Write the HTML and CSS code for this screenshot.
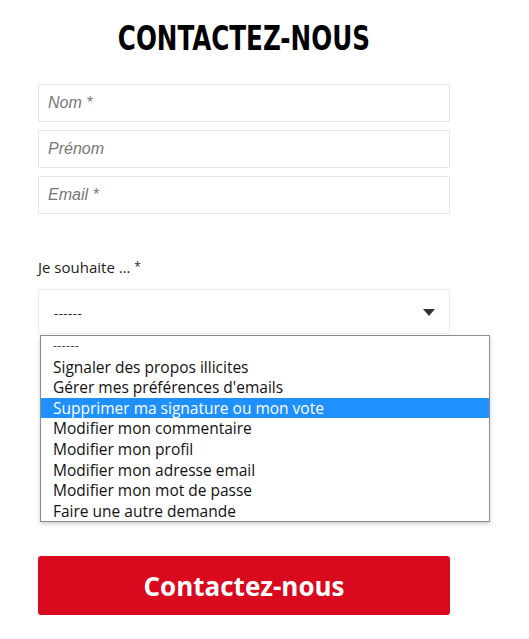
FILE: index.html
```html
<!DOCTYPE html>
<html lang="fr">
<head>
<meta charset="utf-8">
<link rel="stylesheet" href="styles.css">
</head>
<body>
<div class="page">
  <h1 class="title"><span class="title-text">CONTACTEZ-NOUS</span></h1>
  <div class="fields">
    <div class="field"><span class="ph">Nom *</span></div>
    <div class="field"><span class="ph">Prénom</span></div>
    <div class="field"><span class="ph">Email *</span></div>
  </div>
  <div class="label">Je souhaite … <span class="req">*</span></div>
  <div class="select-wrap">
    <div class="select">
      <span class="sel-value">------</span>
      <svg class="arrow" width="12" height="7" viewBox="0 0 12 7"><path d="M0 0H12L6 7Z" fill="#333"/></svg>
    </div>
    <ul class="dropdown">
      <li class="opt dash">------</li>
      <li class="opt">Signaler des propos illicites</li>
      <li class="opt">Gérer mes préférences d'emails</li>
      <li class="opt active">Supprimer ma signature ou mon vote</li>
      <li class="opt">Modifier mon commentaire</li>
      <li class="opt">Modifier mon profil</li>
      <li class="opt">Modifier mon adresse email</li>
      <li class="opt">Modifier mon mot de passe</li>
      <li class="opt">Faire une autre demande</li>
    </ul>
  </div>
  <button class="btn">Contactez-nous</button>
</div>
</body>
</html>
```
FILE: styles.css
```css
html, body { margin: 0; padding: 0; background: #fff; }
body { font-family: "Open Sans", "Noto Sans", sans-serif; color: #222; }
.page { width: 412px; margin-left: 38px; padding-top: 19px; }
.title {
  margin: 0 0 25px 0;
  text-align: center;
  font-family: "DejaVu Sans", sans-serif;
  font-stretch: condensed;
  font-weight: bold;
  font-size: 33px;
  line-height: 40px;
  color: #000;
}
.title-text { display: inline-block; transform: scaleX(0.83); transform-origin: center; white-space: nowrap; }
.fields { display: flex; flex-direction: column; gap: 8px; }
.field {
  height: 36px;
  border: 1px solid #e6e6e6;
  display: flex; align-items: center;
  padding-left: 9px;
}
.ph {
  font-family: "Liberation Sans", Arial, sans-serif;
  font-style: italic;
  font-size: 16px;
  color: #777;
}
.label { margin-top: 43px; font-size: 15px; color: #222; line-height: 20px; }
.req { font-size: 12px; vertical-align: 2px; }
.select-wrap { position: relative; margin-top: 12px; }
.select {
  height: 45px;
  border: 1px solid #ececec;
  display: flex; align-items: center; justify-content: space-between;
  padding: 2px 14px 0 15px;
  box-sizing: border-box;
}
.sel-value { font-size: 13px; color: #222; letter-spacing: 0.5px; }
.dropdown {
  position: absolute;
  left: 2px; top: 46px;
  width: 448px;
  margin: 0; padding: 0;
  list-style: none;
  background: #fff;
  border: 1px solid #8c8c8c;
  box-shadow: 0 2px 4px rgba(0,0,0,0.2);
  z-index: 2;
}
.opt {
  font-size: 15.5px;
  line-height: 20.6px;
  height: 20.6px;
  padding-left: 12px;
  color: #111;
  white-space: nowrap;
}
.opt.dash { font-size: 12px; color: #444; letter-spacing: 0.5px; }
.opt.active { background: #1e90ff; color: #fff; }
.btn {
  display: block;
  width: 412px;
  height: 59px;
  margin-top: 222px;
  border: 0;
  border-radius: 3px;
  background: #d90a1e;
  color: #fff;
  font-family: "Open Sans", "Noto Sans", sans-serif;
  font-weight: bold;
  font-size: 26px;
  cursor: pointer;
}
```
